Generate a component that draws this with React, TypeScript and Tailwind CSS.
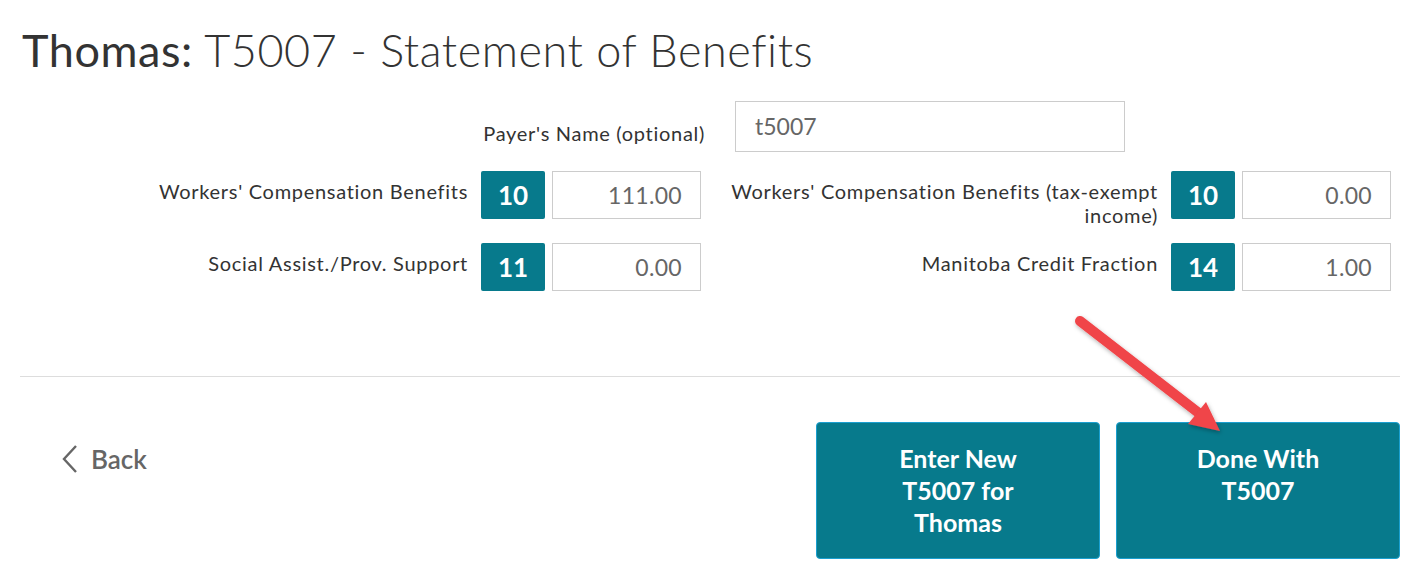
import React from "react";

const font = { fontFamily: "Lato, 'Noto Sans', sans-serif" };

function Field({ label, code, value }: { label: string; code: string; value: string }) {
  return (
    <div className="flex items-start justify-end h-[48px]">
      <div className="w-[440px] text-right text-[20px] tracking-[0.7px] leading-[24px] text-[#333] pt-[8px] pr-[13px]">{label}</div>
      <div className="w-[64px] h-[48px] shrink-0 bg-[#077a8c] rounded-[2px] flex items-center justify-center text-white text-[26px] font-bold">
        {code}
      </div>
      <div className="ml-[7px] w-[149px] h-[48px] shrink-0 border border-[#cccccc] flex items-center justify-end pr-[18px] text-[23px] tracking-[0.3px] text-[#666]">
        {value}
      </div>
    </div>
  );
}

export default function App() {
  return (
    <div className="relative w-[1410px] h-[584px] bg-white overflow-hidden" style={font}>
      <div className="pl-[20px] pr-[10px] pt-[22px]">
        <h1 className="text-[45px] leading-[56px] text-[#333] pl-[2px] font-light tracking-[0.55px]">
          <span className="font-normal">Thomas:</span> T5007 - Statement of Benefits
        </h1>
        <div className="mt-[23px] flex items-center">
          <div className="w-[685px] text-right text-[20px] tracking-[0.7px] text-[#333] pt-[12px]">Payer's Name (optional)</div>
          <div className="ml-[30px] w-[390px] h-[51px] border border-[#cccccc] flex items-center pl-[19px] text-[23px] text-[#666]">
            t5007
          </div>
        </div>
        <div className="mt-[19px] grid grid-cols-[681px_690px] gap-y-[24px]">
          <Field label="Workers' Compensation Benefits" code="10" value="111.00" />
          <Field label="Workers' Compensation Benefits (tax-exempt income)" code="10" value="0.00" />
          <Field label="Social Assist./Prov. Support" code="11" value="0.00" />
          <Field label="Manitoba Credit Fraction" code="14" value="1.00" />
        </div>
        <div className="mt-[85px] h-px bg-[#dddddd]" />
        <div className="mt-[45px] flex items-start">
          <div className="flex items-center mt-[23px] ml-[42px] text-[#666]">
            <svg width="16" height="28" viewBox="0 0 16 28" fill="none" stroke="#666" strokeWidth="2.4">
              <polyline points="14,1 2,14 14,27" />
            </svg>
            <span className="ml-[13px] text-[26px] font-semibold leading-none">Back</span>
          </div>
          <div className="ml-auto flex gap-[16px]">
            <button className="w-[284px] h-[137px] bg-[#077a8c] border border-[#1a9fd0] rounded-[4px] text-white text-[25px] font-bold leading-[32px] flex justify-center pt-[19px]">
              <span className="w-[150px] text-center">Enter New T5007 for Thomas</span>
            </button>
            <button className="w-[284px] h-[137px] bg-[#077a8c] border border-[#1a9fd0] rounded-[4px] text-white text-[25px] font-bold leading-[32px] flex justify-center pt-[19px]">
              <span className="w-[150px] text-center">Done With T5007</span>
            </button>
          </div>
        </div>
      </div>
      <svg className="absolute left-0 top-0 pointer-events-none" width="1410" height="584">
        <defs>
          <filter id="sh" x="-20%" y="-20%" width="140%" height="140%">
            <feDropShadow dx="1" dy="2" stdDeviation="2" floodColor="#000" floodOpacity="0.3" />
          </filter>
        </defs>
        <g filter="url(#sh)">
          <line x1="1080" y1="321" x2="1200" y2="414" stroke="#f04448" strokeWidth="10" strokeLinecap="round" />
          <polygon points="1220,431 1188,424 1206,402" fill="#f04448" />
        </g>
      </svg>
    </div>
  );
}
